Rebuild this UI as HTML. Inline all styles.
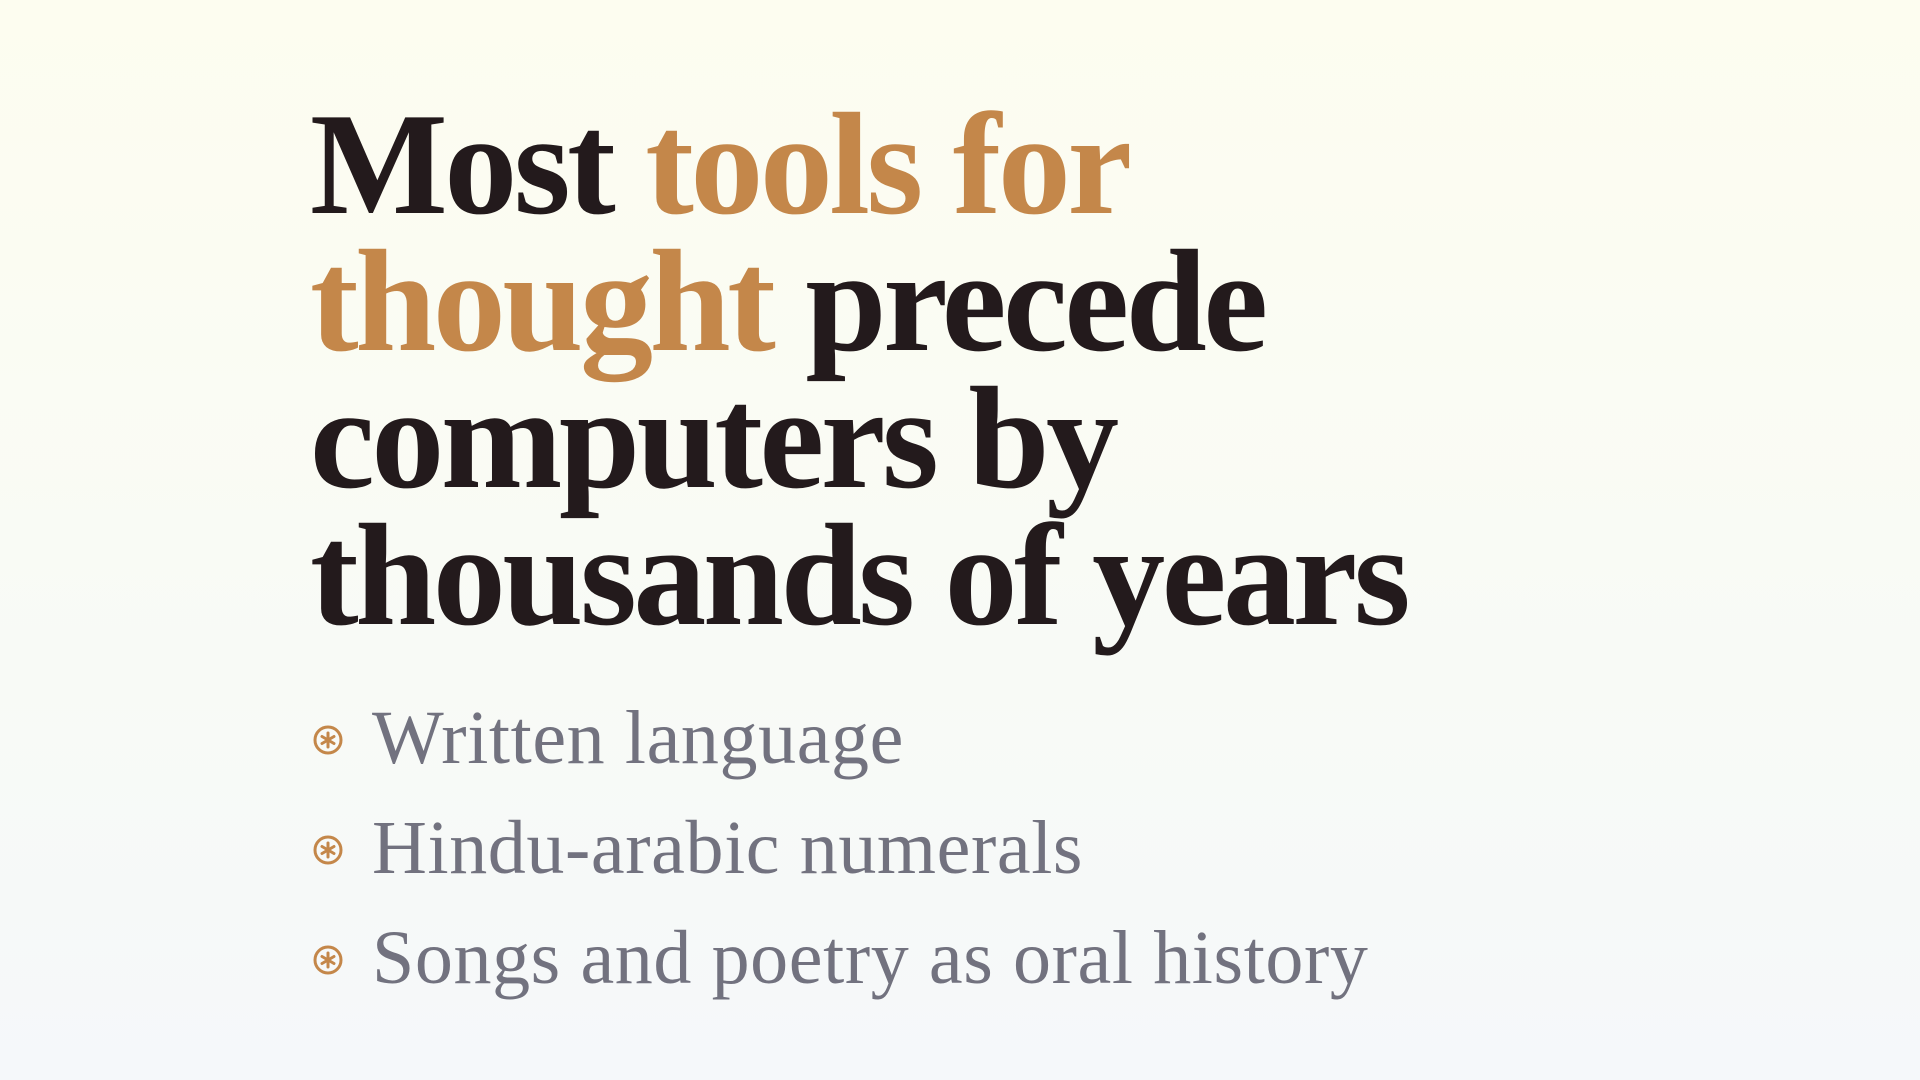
<!DOCTYPE html>
<html><head><style>
body{margin:0;width:1920px;height:1080px;overflow:hidden;background:linear-gradient(180deg,#fdfdf0 0%,#f9fbf5 50%,#f5f8fa 100%);font-family:"Liberation Serif",serif;}
h1{position:absolute;left:310px;top:96px;margin:0;font-size:146px;line-height:137px;font-weight:bold;color:#231a1c;letter-spacing:-3.5px;width:1300px}
h1 span{color:#c4874a}
ul{position:absolute;left:312px;top:683px;margin:0;padding:0;list-style:none}
li{position:relative;padding-left:60px;font-size:76px;line-height:110px;height:110px;color:#72727f;letter-spacing:0.6px}
li svg{position:absolute;left:0;top:41px}
</style></head><body>
<h1>Most <span>tools for<br>thought</span> precede<br>computers by<br>thousands of years</h1>
<ul>
<li><svg width="32" height="32" viewBox="0 0 32 32"><circle cx="16" cy="16" r="13" fill="none" stroke="#c4874a" stroke-width="3"/><g stroke="#c4874a" stroke-width="3" stroke-linecap="round"><path d="M16 9v14M10 12.5l12 7M10 19.5l12-7"/></g></svg>Written language</li>
<li><svg width="32" height="32" viewBox="0 0 32 32"><circle cx="16" cy="16" r="13" fill="none" stroke="#c4874a" stroke-width="3"/><g stroke="#c4874a" stroke-width="3" stroke-linecap="round"><path d="M16 9v14M10 12.5l12 7M10 19.5l12-7"/></g></svg>Hindu-arabic numerals</li>
<li><svg width="32" height="32" viewBox="0 0 32 32"><circle cx="16" cy="16" r="13" fill="none" stroke="#c4874a" stroke-width="3"/><g stroke="#c4874a" stroke-width="3" stroke-linecap="round"><path d="M16 9v14M10 12.5l12 7M10 19.5l12-7"/></g></svg>Songs and poetry as oral history</li>
</ul>
</body></html>
